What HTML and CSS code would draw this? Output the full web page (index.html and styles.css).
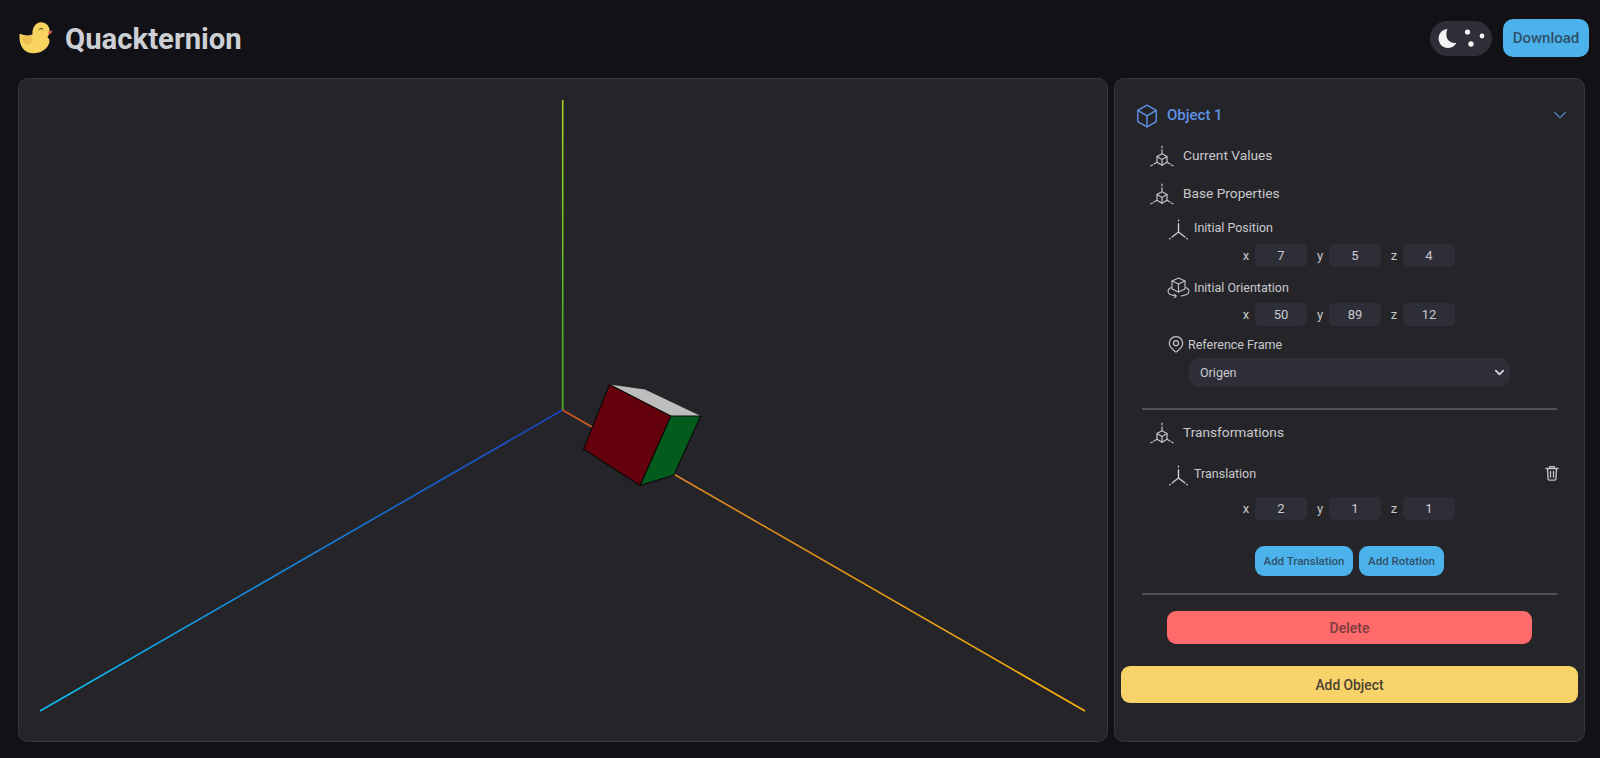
FILE: index.html
```html
<!DOCTYPE html>
<html lang="en">
<head>
<meta charset="utf-8">
<title>Quackternion</title>
<link rel="stylesheet" href="styles.css">
</head>
<body>
<svg class="defs" width="0" height="0" aria-hidden="true">
  <symbol id="i-cube-axes" viewBox="0 0 24 24" fill="none" stroke="currentColor" stroke-width="1.100" stroke-linecap="round" stroke-linejoin="round">
    <path d="M12 1v1.500M12 4.500v3"/>
    <path d="M12 8l4.600 2.700v5.300L12 18.700l-4.600-2.700v-5.300z"/>
    <path d="M7.400 10.700L12 13.400l4.600-2.700M12 13.400v5.300"/>
    <path d="M16.600 16l2.800 1.600M20.800 18.400l1.400.8M7.400 16l-2.800 1.600M3.200 18.400l-1.400.8"/>
  </symbol>
  <symbol id="i-axes" viewBox="0 0 24 24" fill="none" stroke="currentColor" stroke-width="1.300" stroke-linecap="round" stroke-linejoin="round">
    <path d="M12 2v.8M12 5.500v8M12 13.500L5.800 18.200M12 13.500l6.200 4.700M3.600 20l.4-.4M20.400 20l-.4-.4"/>
  </symbol>
  <symbol id="i-rotate" viewBox="0 0 24 22" fill="none" stroke="currentColor" stroke-width="1.100" stroke-linecap="round" stroke-linejoin="round">
    <path d="M12.500 2L19 5v8l-6.500 3L6 13V5z"/>
    <path d="M6 5l6.500 3L19 5M12.500 8v8"/>
    <path d="M5 11.500C3 12.500 2 13.800 2 15c0 2.500 3.500 4.500 8 5M20 11.500c2 1 3 2.300 3 3.500 0 2.500-3.500 4.500-8 5"/>
    <path d="M8.500 18.300l1.700 1.700-1.700 1.700"/>
  </symbol>
  <symbol id="i-pin" viewBox="0 0 24 24" fill="none" stroke="currentColor" stroke-width="1.500" stroke-linecap="round" stroke-linejoin="round">
    <path d="M9 11a3 3 0 1 0 6 0a3 3 0 0 0-6 0"/>
    <path d="M17.657 16.657l-4.243 4.243a2 2 0 0 1-2.827 0l-4.244-4.243a8 8 0 1 1 11.314 0z"/>
  </symbol>
</svg>

<div class="app">
  <header class="topbar">
    <div class="brand">
      <svg class="duck" viewBox="18 20 36 36" aria-hidden="true">
        <path d="M19.500 34.200c1.200-.6 2.500.4 4.500.9 3 .7 6 .3 8.500-.9C32 28 35.500 22.300 41 22.300c5 0 8.700 4 8.700 8.700 0 2.400-1 4.400-2.300 5.900 1.700 1.600 2.300 3.200 2 5-1 6.500-8.500 11.300-16 11.300-9 0-14.500-7-13.900-18 0-.5 0-.8 0-1z" fill="#f8d35f"/>
        <path d="M21.500 37c3-.8 7-1 10.500-.5 1 3.500-1 7.500-4.500 8-3 .3-5.500-3.500-6-7.500z" fill="#ebbe4e"/>
        <path d="M48.300 31.500c1.300 0 2.800-.5 4.200-.8-.3 1.700-1.800 3.300-3.900 3.700-.2-1-.2-2-.3-2.900z" fill="#ec5f56"/>
        <path d="M39 29.500c1-1.500 3-1.500 4 0" fill="none" stroke="#3a3320" stroke-width="1" stroke-linecap="round"/>
      </svg>
      <h1 class="title">Quackternion</h1>
    </div>
    <div class="actions">
      <div class="toggle">
        <svg class="toggle-art" viewBox="0 0 62 35" aria-hidden="true">
          <path d="M17.500 8a9.500 9.500 0 1 0 9 13.800c-5 1-9.500-2-10-6.700-.3-3 .2-5.400 1-7.100z" fill="#f4f4f4"/>
          <circle cx="37.500" cy="11" r="2.600" fill="#f4f4f4"/>
          <circle cx="52" cy="15" r="2.400" fill="#f4f4f4"/>
          <circle cx="41" cy="23" r="2.700" fill="#f4f4f4"/>
        </svg>
      </div>
      <button class="btn btn-download" type="button">Download</button>
    </div>
  </header>

  <main class="workspace">
    <section class="viewport">
      <svg class="scene" viewBox="0 0 1088 662" preserveAspectRatio="none" aria-hidden="true">
        <defs>
          <linearGradient id="gy" gradientUnits="userSpaceOnUse" x1="543" y1="21" x2="543" y2="331"><stop offset="0" stop-color="#c8d820"/><stop offset="1" stop-color="#45b820"/></linearGradient>
          <linearGradient id="gb" gradientUnits="userSpaceOnUse" x1="21" y1="632" x2="543" y2="331"><stop offset="0" stop-color="#0cbcf0"/><stop offset="1" stop-color="#1c3cc0"/></linearGradient>
          <linearGradient id="gr" gradientUnits="userSpaceOnUse" x1="543" y1="331" x2="1066" y2="632"><stop offset="0" stop-color="#c8381e"/><stop offset="0.3" stop-color="#de8420"/><stop offset="1" stop-color="#f8b008"/></linearGradient>
        </defs>
        <g transform="translate(-19 -79)" fill="none" stroke-width="1.600">
          <path d="M562.700 100V410" stroke="url(#gy)"/>
          <path d="M40 711L562.500 410" stroke="url(#gb)"/>
          <path d="M562.500 410L1085 711" stroke="url(#gr)"/>
        </g>
        <g transform="translate(-19 -79)" stroke="#0a0a0a" stroke-width="1.200" stroke-linejoin="round">
          <path d="M609.500 384.500L645 389.500 700.700 416 670.700 416z" fill="#bdbdbd" stroke="none"/>
          <path d="M670.700 416H700.700L674 475 640 485.500z" fill="#035c1c"/>
          <path d="M609.500 384.500L670.700 416 640 485.500 583.500 449z" fill="#65000d"/>
        </g>
      </svg>
    </section>

    <aside class="panel">
      <div class="obj-head">
        <svg class="ic-cube" viewBox="0 0 24 24" fill="none" stroke="currentColor" stroke-width="1.300" stroke-linecap="round" stroke-linejoin="round" aria-hidden="true">
          <path d="M12 2l8.500 4.800v10.400L12 22l-8.500-4.800V6.800z"/>
          <path d="M3.500 6.800L12 11.800l8.500-5M12 11.800V22"/>
        </svg>
        <span class="obj-name">Object 1</span>
        <svg class="ic-chev" viewBox="0 0 24 24" fill="none" stroke="currentColor" stroke-width="1.600" stroke-linecap="round" stroke-linejoin="round" aria-hidden="true"><path d="M4 8l8 8 8-8"/></svg>
      </div>

      <div class="sec-row sec-current"><svg class="ic-sec"><use href="#i-cube-axes"/></svg><span>Current Values</span></div>
      <div class="sec-row sec-base"><svg class="ic-sec"><use href="#i-cube-axes"/></svg><span>Base Properties</span></div>

      <div class="sub-row sub-first"><svg class="ic-sub"><use href="#i-axes"/></svg><span>Initial Position</span></div>
      <div class="xyz xyz-first">
        <label>x</label><input type="text" value="7">
        <label>y</label><input type="text" value="5">
        <label>z</label><input type="text" value="4">
      </div>

      <div class="sub-row sub-orient"><svg class="ic-rot"><use href="#i-rotate"/></svg><span>Initial Orientation</span></div>
      <div class="xyz">
        <label>x</label><input type="text" value="50">
        <label>y</label><input type="text" value="89">
        <label>z</label><input type="text" value="12">
      </div>

      <div class="sub-row sub-ref"><svg class="ic-pin"><use href="#i-pin"/></svg><span>Reference Frame</span></div>
      <div class="select-wrap">
        <select class="frame"><option>Origen</option></select>
        <svg class="select-chev" viewBox="0 0 12 12" fill="none" stroke="currentColor" stroke-width="2" stroke-linecap="round" stroke-linejoin="round" aria-hidden="true"><path d="M2 4l4 4 4-4"/></svg>
      </div>

      <hr class="rule rule-a">

      <div class="sec-row sec-trans"><svg class="ic-sec"><use href="#i-cube-axes"/></svg><span>Transformations</span></div>

      <div class="sub-row sub-translation">
        <svg class="ic-sub"><use href="#i-axes"/></svg><span>Translation</span>
        <svg class="ic-trash" viewBox="0 0 24 24" fill="none" stroke="currentColor" stroke-width="1.800" stroke-linecap="round" stroke-linejoin="round" aria-hidden="true">
          <path d="M4 6h16M9 6V3.500h6V6"/>
          <path d="M6 6l.8 14a1.500 1.500 0 0 0 1.500 1.400h7.400a1.500 1.500 0 0 0 1.500-1.400L18 6"/>
          <path d="M10 10v7.500M14 10v7.500"/>
        </svg>
      </div>
      <div class="xyz xyz-trans">
        <label>x</label><input type="text" value="2">
        <label>y</label><input type="text" value="1">
        <label>z</label><input type="text" value="1">
      </div>

      <div class="add-row">
        <button class="btn btn-add btn-add-t" type="button">Add Translation</button>
        <button class="btn btn-add btn-add-r" type="button">Add Rotation</button>
      </div>

      <hr class="rule rule-b">

      <button class="btn btn-delete" type="button">Delete</button>
      <button class="btn btn-object" type="button">Add Object</button>
    </aside>
  </main>
</div>
</body>
</html>
```
FILE: styles.css
```css
* { box-sizing: border-box; }

html, body {
  margin: 0;
  height: 100%;
  overflow: hidden;
}

body {
  background: #111116;
  color: #c9c9cd;
  font-family: Roboto, "Liberation Sans", sans-serif;
}

.defs { position: absolute; }

.app {
  display: flex;
  flex-direction: column;
  height: 758px;
}

.topbar {
  display: flex;
  align-items: center;
  justify-content: space-between;
  height: 78px;
  padding: 0 11px 2px 18px;
  flex: none;
}

.brand {
  display: flex;
  align-items: center;
  gap: 11px;
}

.duck { width: 36px; height: 36px; display: block; }

.title {
  margin: 2px 0 0;
  font-size: 29.300px;
  line-height: 36px;
  font-weight: 700;
  color: #ccd0d4;
}

.actions {
  display: flex;
  align-items: center;
  gap: 11px;
}

.toggle {
  width: 62px;
  height: 35px;
  border-radius: 18px;
  background: #2f2f3a;
}

.toggle-art { display: block; width: 62px; height: 35px; }

.btn {
  border: 0;
  font-family: inherit;
  font-weight: 500;
  padding: 0;
  cursor: pointer;
}

.btn-download {
  width: 86px;
  height: 38px;
  border-radius: 10px;
  background: #4cb2ec;
  color: #2f5068;
  font-size: 15px;
}

.workspace {
  display: flex;
  gap: 6px;
  padding: 0 15px 16px 18px;
  flex: 1;
  min-height: 0;
}

.viewport, .panel {
  background: #252529;
  border: 1px solid #37373d;
  border-radius: 10px;
}

.viewport {
  width: 1090px;
  flex: none;
  overflow: hidden;
}

.scene { display: block; width: 100%; height: 100%; }

.panel {
  flex: 1;
  padding: 24px 6px;
  min-width: 0;
}

.obj-head {
  display: flex;
  align-items: center;
  height: 24px;
  padding: 0 10px 0 13px;
  color: #5f92e6;
}

.ic-cube { width: 26px; height: 26px; margin-top: 2px; flex: none; }

.obj-name {
  margin-left: 7px;
  font-size: 15px;
  font-weight: 500;
}

.ic-chev { width: 16px; height: 16px; margin-left: auto; }

.sec-row {
  display: flex;
  align-items: center;
  height: 24px;
  padding-left: 28px;
  font-size: 13.700px;
  color: #c9c9cd;
}

.sec-row span { margin-left: 8px; }

.ic-sec { width: 26px; height: 26px; margin-top: 6px; color: #c4c4c8; flex: none; }

.sec-current { margin-top: 16px; }
.sec-base { margin-top: 14px; }
.sec-trans { margin-top: 10px; }

.sub-row {
  display: flex;
  align-items: center;
  height: 20px;
  padding-left: 45px;
  font-size: 12.500px;
  color: #c9c9cd;
}

.ic-sub { width: 25px; height: 25px; margin-top: 6px; color: #cfcfd3; flex: none; }
.sub-row .ic-sub + span { margin-left: 3px; }

.ic-rot { width: 24px; height: 22px; color: #c4c4c8; flex: none; }
.ic-rot + span { margin-left: 4px; }

.ic-pin { width: 20px; height: 20px; color: #c4c4c8; flex: none; }
.ic-pin + span { margin-left: 2px; }

.sub-first { margin-top: 12px; }
.sub-orient { margin-top: 10px; }
.sub-ref { margin-top: 8px; }
.sub-translation { margin-top: 19px; }

.ic-trash {
  width: 18px;
  height: 18px;
  margin-left: auto;
  margin-right: 17px;
  color: #c4c4c8;
}

.xyz {
  display: flex;
  align-items: center;
  margin-top: 6px;
  padding-left: 117px;
}

.xyz-first { margin-top: 7px; }
.xyz-trans { margin-top: 14px; }

.xyz label {
  width: 16px;
  margin-right: 1px;
  text-align: center;
  font-size: 13px;
  color: #c9c9cd;
}

.xyz input {
  width: 52px;
  height: 23px;
  margin-right: 5px;
  padding: 0;
  border: 0;
  border-radius: 5px;
  background: #2e2e38;
  color: #c9c9cd;
  font-family: inherit;
  font-size: 13px;
  text-align: center;
  outline: none;
}

.select-wrap {
  position: relative;
  width: 321px;
  margin: 4px 0 0 68px;
}

.frame {
  display: block;
  width: 100%;
  height: 29px;
  padding: 0 11px;
  appearance: none;
  border: 0;
  border-radius: 10px;
  background: #2e2e38;
  color: #c9c9cd;
  font-family: inherit;
  font-size: 12.500px;
  outline: none;
}

.select-chev {
  position: absolute;
  top: 9px;
  right: 5px;
  width: 11px;
  height: 11px;
  color: #d6d6da;
  pointer-events: none;
}

.rule {
  height: 2px;
  margin: 0 21px;
  border: 0;
  background: #505055;
}

.rule-a { margin-top: 21px; }
.rule-b { margin-top: 17px; }

.add-row {
  display: flex;
  justify-content: flex-start;
  gap: 6px;
  margin-top: 26px;
  padding-left: 134px;
}

.btn-add {
  height: 30px;
  border-radius: 9px;
  background: #4cb2ec;
  color: #2f5068;
  font-size: 11.500px;
}

.btn-add-t { width: 98px; }
.btn-add-r { width: 85px; }

.btn-delete {
  display: block;
  width: 365px;
  height: 33px;
  margin: 16px 0 0 46px;
  border-radius: 9px;
  background: #ff6a6a;
  color: #7d3a40;
  font-size: 14px;
}

.btn-object {
  display: block;
  width: 457px;
  height: 37px;
  margin-top: 22px;
  border-radius: 9px;
  background: #f8d36a;
  color: #4a4232;
  font-size: 13.800px;
}
```
